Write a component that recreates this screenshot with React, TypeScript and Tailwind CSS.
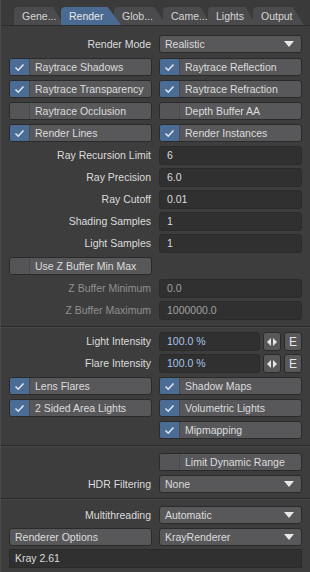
import React from "react";

const font = { fontFamily: '"Liberation Sans", Arial, sans-serif' };

const Check = () => (
  <svg width="11" height="9" viewBox="0 0 11 9">
    <polyline points="1.5,4.5 4.2,7.2 9.5,1.5" fill="none" stroke="#dfe6ee" strokeWidth="1.6" />
  </svg>
);

const Arrow = () => (
  <svg width="10" height="6" viewBox="0 0 10 6" className="mr-[1px]">
    <polygon points="0,0 10,0 5,6" fill="#e8e8e8" />
  </svg>
);

const Toggle = ({ label, on = true }: { label: string; on?: boolean }) => (
  <div className="h-[18px] flex rounded-[3px] border border-[#2a2a2a] bg-[#58585b] overflow-hidden">
    <div
      className={
        "w-[20px] h-full flex items-center justify-center border-r border-[#4a4a4d] " +
        (on ? "bg-[#4b6c95]" : "bg-[#555558]")
      }
    >
      {on && <Check />}
    </div>
    <div className="flex-1 flex items-center pl-[5px] text-[#dcdcdc]">{label}</div>
  </div>
);

const Button = ({ label }: { label: string }) => (
  <div className="h-[18px] flex items-center pl-[5px] rounded-[3px] border border-[#2a2a2a] bg-[#58585b] text-[#dcdcdc]">
    {label}
  </div>
);

const Dropdown = ({ value }: { value: string }) => (
  <div className="h-[18px] flex items-center justify-between pl-[5px] pr-[6px] rounded-[3px] border border-[#2a2a2a] bg-[#58585b] text-[#dcdcdc]">
    <span>{value}</span>
    <Arrow />
  </div>
);

const Field = ({ value, dim = false, blue = false }: { value: string; dim?: boolean; blue?: boolean }) => (
  <div
    className={
      "h-[19px] flex items-center pl-[7px] rounded-[3px] border border-[#2b2b2b] bg-[#303030] " +
      (blue ? "text-[#a9c5ee]" : dim ? "text-[#a0a0a0]" : "text-[#dcdcdc]")
    }
  >
    {value}
  </div>
);

const Label = ({ text, dim = false }: { text: string; dim?: boolean }) => (
  <div className={"flex items-center justify-end pr-[1px] " + (dim ? "text-[#909090]" : "text-[#dcdcdc]")}>{text}</div>
);

const Row = ({ children, h = "h-[18px]" }: { children: React.ReactNode; h?: string }) => (
  <div className={"grid grid-cols-[143px_143px] gap-x-[7px] px-[8px] " + h}>{children}</div>
);

const Sep = () => <div className="h-[2px] border-t border-[#2a2a2a] bg-[#474747]" />;

const Spin = () => (
  <div className="w-[18px] h-[19px] flex items-center justify-center rounded-[3px] border border-[#2a2a2a] bg-[#58585b]">
    <svg width="10" height="8" viewBox="0 0 10 8">
      <polygon points="4,0 4,8 0,4" fill="#e6e6e6" />
      <polygon points="6,0 6,8 10,4" fill="#e6e6e6" />
    </svg>
  </div>
);

const EBtn = () => (
  <div className="w-[18px] h-[19px] flex items-center justify-center rounded-[3px] border border-[#2a2a2a] bg-[#58585b] text-[#e6e6e6] text-[12px]">
    E
  </div>
);

const tabs = [
  { t: "Gene...", w: "w-[50px]", ml: "" },
  { t: "Render", w: "w-[60px]", ml: "-ml-[3px]", active: true },
  { t: "Glob...", w: "w-[52px]", ml: "-ml-[7px]" },
  { t: "Came...", w: "w-[48px]", ml: "-ml-[3px]" },
  { t: "Lights", w: "w-[48px]", ml: "-ml-[3px]" },
  { t: "Output", w: "w-[51px]", ml: "-ml-[3px]" },
];

const Tabs = () => (
  <div className="h-[26px] pt-[7px] pl-[13px] flex border-b border-[#2c2c2c] bg-[#3a3a3a]">
    {tabs.map((tab, i) => (
      <div
        key={tab.t}
        className={
          tab.w +
          " " +
          tab.ml +
          " h-[18px] rounded-tl-[4px] flex items-center pl-[8px] [clip-path:polygon(0_0,78%_0,100%_100%,0_100%)] " +
          (tab.active ? "bg-[#4a6a91] text-[#e8e8e8]" : "bg-[#4b4b4d] text-[#d6d6d6]")
        }
        style={{ zIndex: tab.active ? 10 : 6 - i }}
      >
        {tab.t}
      </div>
    ))}
  </div>
);

export default function App() {
  return (
    <div className="w-[310px] h-[572px] bg-[#3d3d3d] text-[10.5px] leading-none overflow-hidden border-l border-[#4a4a4a]" style={font}>
      <Tabs />
      <div className="flex flex-col pt-[9px]">
        <Row>
          <Label text="Render Mode" />
          <Dropdown value="Realistic" />
        </Row>
        <div className="flex flex-col gap-[4px] mt-[5px]">
          <Row>
            <Toggle label="Raytrace Shadows" />
            <Toggle label="Raytrace Reflection" />
          </Row>
          <Row>
            <Toggle label="Raytrace Transparency" />
            <Toggle label="Raytrace Refraction" />
          </Row>
          <Row>
            <Toggle label="Raytrace Occlusion" on={false} />
            <Toggle label="Depth Buffer AA" on={false} />
          </Row>
          <Row>
            <Toggle label="Render Lines" />
            <Toggle label="Render Instances" />
          </Row>
        </div>
        <div className="flex flex-col gap-[3px] mt-[4px]">
          <Row h="h-[19px]">
            <Label text="Ray Recursion Limit" />
            <Field value="6" />
          </Row>
          <Row h="h-[19px]">
            <Label text="Ray Precision" />
            <Field value="6.0" />
          </Row>
          <Row h="h-[19px]">
            <Label text="Ray Cutoff" />
            <Field value="0.01" />
          </Row>
          <Row h="h-[19px]">
            <Label text="Shading Samples" />
            <Field value="1" />
          </Row>
          <Row h="h-[19px]">
            <Label text="Light Samples" />
            <Field value="1" />
          </Row>
        </div>
        <div className="mt-[4px]">
          <Row>
            <Toggle label="Use Z Buffer Min Max" on={false} />
            <div />
          </Row>
        </div>
        <div className="flex flex-col gap-[3px] mt-[4px]">
          <Row h="h-[19px]">
            <Label text="Z Buffer Minimum" dim />
            <Field value="0.0" dim />
          </Row>
          <Row h="h-[19px]">
            <Label text="Z Buffer Maximum" dim />
            <Field value="1000000.0" dim />
          </Row>
        </div>
        <div className="mt-[6px]">
          <Sep />
        </div>
        <div className="flex flex-col gap-[3px] mt-[4px]">
          {["Light Intensity", "Flare Intensity"].map((l) => (
            <Row key={l} h="h-[19px]">
              <Label text={l} />
              <div className="flex gap-[3px]">
                <div className="flex-1">
                  <Field value="100.0 %" blue />
                </div>
                <Spin />
                <EBtn />
              </div>
            </Row>
          ))}
        </div>
        <div className="flex flex-col gap-[4px] mt-[4px]">
          <Row>
            <Toggle label="Lens Flares" />
            <Toggle label="Shadow Maps" />
          </Row>
          <Row>
            <Toggle label="2 Sided Area Lights" />
            <Toggle label="Volumetric Lights" />
          </Row>
          <Row>
            <div />
            <Toggle label="Mipmapping" />
          </Row>
        </div>
        <div className="mt-[6px]">
          <Sep />
        </div>
        <div className="flex flex-col gap-[4px] mt-[6px]">
          <Row>
            <div />
            <Toggle label="Limit Dynamic Range" on={false} />
          </Row>
          <Row>
            <Label text="HDR Filtering" />
            <Dropdown value="None" />
          </Row>
        </div>
        <div className="mt-[5px]">
          <Sep />
        </div>
        <div className="flex flex-col gap-[4px] mt-[6px]">
          <Row>
            <Label text="Multithreading" />
            <Dropdown value="Automatic" />
          </Row>
          <Row>
            <Button label="Renderer Options" />
            <Dropdown value="KrayRenderer" />
          </Row>
        </div>
        <div className="px-[8px] mt-[3px]">
          <div className="h-[19px] flex items-center pl-[5px] border border-[#2b2b2b] bg-[#303030] text-[#dcdcdc]">
            Kray 2.61
          </div>
        </div>
      </div>
    </div>
  );
}
